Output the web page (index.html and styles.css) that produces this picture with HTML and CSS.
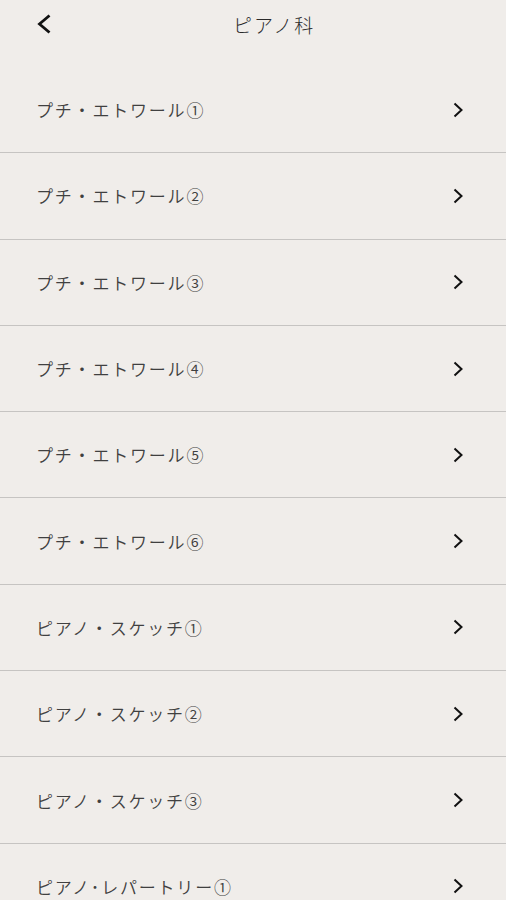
FILE: index.html
```html
<!DOCTYPE html>
<html>
<head>
	<meta charset="utf-8">
	<title>ピアノ科</title>
	<link rel="stylesheet" href="styles.css">
</head>
<body>
	<div class="header">
		<a class="back" href="#">
			<svg width="16" height="20" viewBox="0 0 16 20"><path d="M13.5 1.5 L3.5 10 L13.5 18.5" fill="none" stroke="#111" stroke-width="2.8"/></svg>
		</a>
		<div class="title">ピアノ科</div>
	</div>
	<ul class="list">
		<li class="item"><span class="label">プチ・エトワール①</span><svg class="arrow" width="12" height="16" viewBox="0 0 12 16"><path d="M2.5 1.5 L9.5 8 L2.5 14.5" fill="none" stroke="#111" stroke-width="2"/></svg></li>
		<li class="item"><span class="label">プチ・エトワール②</span><svg class="arrow" width="12" height="16" viewBox="0 0 12 16"><path d="M2.5 1.5 L9.5 8 L2.5 14.5" fill="none" stroke="#111" stroke-width="2"/></svg></li>
		<li class="item"><span class="label">プチ・エトワール③</span><svg class="arrow" width="12" height="16" viewBox="0 0 12 16"><path d="M2.5 1.5 L9.5 8 L2.5 14.5" fill="none" stroke="#111" stroke-width="2"/></svg></li>
		<li class="item"><span class="label">プチ・エトワール④</span><svg class="arrow" width="12" height="16" viewBox="0 0 12 16"><path d="M2.5 1.5 L9.5 8 L2.5 14.5" fill="none" stroke="#111" stroke-width="2"/></svg></li>
		<li class="item"><span class="label">プチ・エトワール⑤</span><svg class="arrow" width="12" height="16" viewBox="0 0 12 16"><path d="M2.5 1.5 L9.5 8 L2.5 14.5" fill="none" stroke="#111" stroke-width="2"/></svg></li>
		<li class="item"><span class="label">プチ・エトワール⑥</span><svg class="arrow" width="12" height="16" viewBox="0 0 12 16"><path d="M2.5 1.5 L9.5 8 L2.5 14.5" fill="none" stroke="#111" stroke-width="2"/></svg></li>
		<li class="item"><span class="label">ピアノ・スケッチ①</span><svg class="arrow" width="12" height="16" viewBox="0 0 12 16"><path d="M2.5 1.5 L9.5 8 L2.5 14.5" fill="none" stroke="#111" stroke-width="2"/></svg></li>
		<li class="item"><span class="label">ピアノ・スケッチ②</span><svg class="arrow" width="12" height="16" viewBox="0 0 12 16"><path d="M2.5 1.5 L9.5 8 L2.5 14.5" fill="none" stroke="#111" stroke-width="2"/></svg></li>
		<li class="item"><span class="label">ピアノ・スケッチ③</span><svg class="arrow" width="12" height="16" viewBox="0 0 12 16"><path d="M2.5 1.5 L9.5 8 L2.5 14.5" fill="none" stroke="#111" stroke-width="2"/></svg></li>
		<li class="item"><span class="label">ピアノ･レパートリー①</span><svg class="arrow" width="12" height="16" viewBox="0 0 12 16"><path d="M2.5 1.5 L9.5 8 L2.5 14.5" fill="none" stroke="#111" stroke-width="2"/></svg></li>
	</ul>
</body>
</html>
```
FILE: styles.css
```css
html, body {
	background: #f0edea;
	margin: 0;
	padding: 0;
	height: 900px;
	overflow: hidden;
}
body {
	color: #404040;
	font-family: "Noto Sans CJK JP", "Noto Sans", sans-serif;
}
.header {
	display: flex;
	align-items: center;
	height: 48px;
	padding: 0 0 0 36px;
}
.back {
	display: flex;
	width: 16px;
	height: 20px;
}
.title {
	color: #2a2a2a;
	font-size: 19px;
	font-weight: 300;
	margin-left: 181px;
	letter-spacing: 2px;
}
.list {
	list-style: none;
	margin: 19px 0 0;
	padding: 0;
}
.item {
	box-sizing: border-box;
	display: flex;
	align-items: center;
	justify-content: space-between;
	height: 86.3px;
	padding: 0 42px 0 36px;
	border-bottom: 1.5px solid #c6c4c2;
}
.label {
	font-size: 17px;
	font-weight: 350;
	letter-spacing: 1.8px;
}
.arrow {
	display: block;
}
```
